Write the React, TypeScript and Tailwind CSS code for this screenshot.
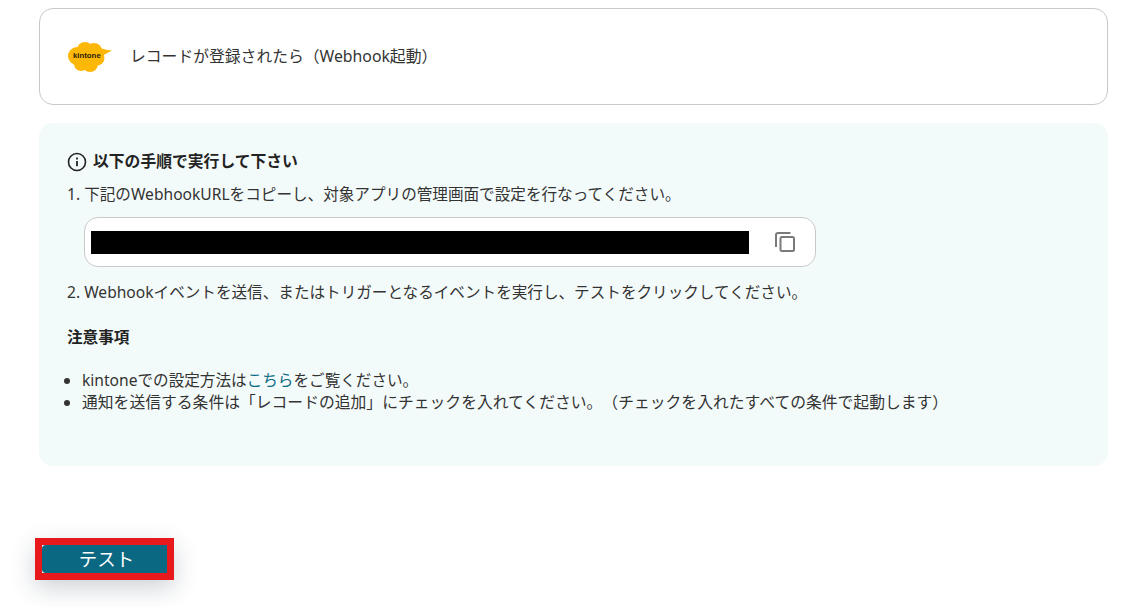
const FONT = "font-['Noto_Sans','Noto_Sans_CJK_JP',sans-serif] [text-spacing-trim:space-all]";

// kintone logo: yellow cloud with a speech tail
function KintoneLogo() {
  return (
    <svg width="44" height="32" viewBox="0 0 44 32" className="shrink-0">
      <g fill="#FDB706">
        <circle cx="9" cy="15" r="9" />
        <circle cx="17" cy="9" r="8" />
        <circle cx="26" cy="10" r="8" />
        <circle cx="29" cy="17" r="7.500" />
        <circle cx="13" cy="23" r="7" />
        <circle cx="22" cy="23" r="8" />
        <path d="M28 6C33 7 38 9 44 9.500C41 11 38 13 34 15Z" />
      </g>
      <text x="5" y="17" fontSize="7.800" fontWeight="700" fill="#2b2200" fontFamily="'Liberation Sans', sans-serif">
        kintone
      </text>
    </svg>
  );
}

function InfoIcon() {
  return (
    <svg width="20" height="20" viewBox="0 0 20 20" fill="none" stroke="#222" className="shrink-0">
      <circle cx="10" cy="10" r="8.500" strokeWidth="1.600" />
      <path d="M10 9v5.200" strokeWidth="1.800" />
      <path d="M10 5.600v1.800" strokeWidth="1.800" />
    </svg>
  );
}

function CopyIcon() {
  return (
    <svg width="20" height="20" viewBox="0 0 20 20" fill="none" stroke="#7a7a7a" strokeWidth="2" className="shrink-0">
      <path d="M15.500 1H3A2 2 0 0 0 1 3V15" />
      <rect x="5.500" y="5" width="13.500" height="14" rx="1.500" />
    </svg>
  );
}

export default function App() {
  return (
    <div className={`${FONT} w-[1134px] h-[607px] bg-white overflow-hidden px-[39px] pt-2 text-[#333]`}>
      {/* Trigger card */}
      <div className="w-[1069px] h-[97px] rounded-[14px] border border-[#c9c9c9] flex items-center pl-[28px] gap-[18px]">
        <KintoneLogo />
        <span className="text-[15.800px]">レコードが登録されたら（Webhook起動）</span>
      </div>

      {/* Instructions */}
      <div className="w-[1069px] h-[343px] mt-[18px] rounded-[14px] bg-[#f3fbfa] pl-[28px] pt-[28px]">
        <div className="flex items-center gap-[6px] font-bold text-[#222] text-[15.800px] h-[22px]">
          <InfoIcon />
          以下の手順で実行して下さい
        </div>
        <p className="text-[15.600px] leading-[22px] mt-[10px]">1. 下記のWebhookURLをコピーし、対象アプリの管理画面で設定を行なってください。</p>
        <div className="w-[732px] h-[50px] ml-[17px] mt-[12px] rounded-[14px] border border-[#c9c9c9] bg-white flex items-center pl-[6px] gap-[26px]">
          <div className="w-[658px] h-[23px] bg-black" />
          <CopyIcon />
        </div>
        <p className="text-[15.600px] leading-[22px] mt-[14px]">2. Webhookイベントを送信、またはトリガーとなるイベントを実行し、テストをクリックしてください。</p>
        <p className="font-bold text-[#222] text-[15.600px] leading-[22px] mt-[23px]">注意事項</p>
        <ul className="list-disc pl-[15px] mt-[21px] text-[15.600px] leading-[22px]">
          <li>kintoneでの設定方法は<span className="text-[#0b6b85]">こちら</span>をご覧ください。</li>
          <li className="text-[15.800px]">通知を送信する条件は「レコードの追加」にチェックを入れてください。（チェックを入れたすべての条件で起動します）</li>
        </ul>
      </div>

      {/* Test button with highlight */}
      <div className="mt-[72px] -ml-1 w-[139px] h-[42px] border-[7px] border-[#e8191d] bg-[#e8eef0] shadow-[0_8px_24px_rgba(30,50,70,0.22)]">
        <div className="h-full rounded-l-[4px] bg-[#0b6882] text-white text-[18.500px] pl-[4px] pb-[1px] flex items-center justify-center">
          テスト
        </div>
      </div>
    </div>
  );
}
